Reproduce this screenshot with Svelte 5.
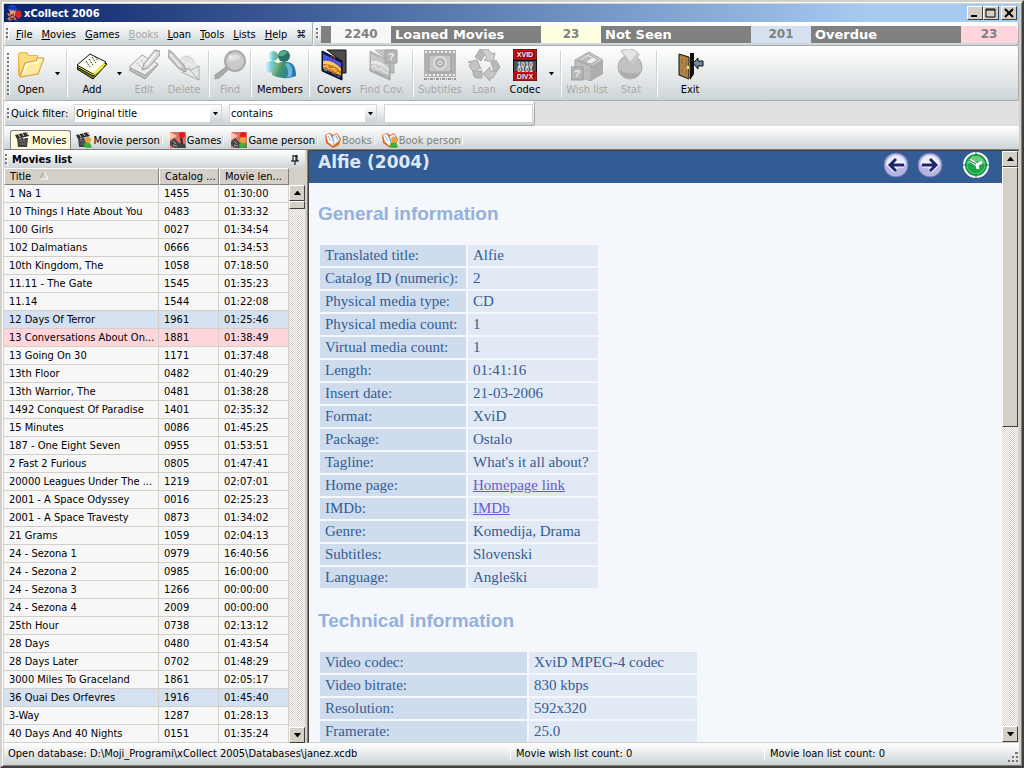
<script lang="ts">
	interface Movie {
		title: string;
		id: string;
		length: string;
		mark?: 'unseen' | 'overdue';
	}

	interface Tool {
		label: string;
		icon: string;
		width: number;
		disabled?: boolean;
		menu?: boolean;
		last?: boolean;
	}

	const menus = [
		{ key: 'F', rest: 'ile' },
		{ key: 'M', rest: 'ovies' },
		{ key: 'G', rest: 'ames' },
		{ key: 'B', rest: 'ooks', disabled: true },
		{ key: 'L', rest: 'oan' },
		{ key: 'T', rest: 'ools' },
		{ key: 'L', rest: 'ists' },
		{ key: 'H', rest: 'elp' }
	];

	// last: a separator follows the button
	const tools: Tool[] = [
		{ label: 'Open', icon: 'open', width: 40, menu: true, last: true },
		{ label: 'Add', icon: 'add', width: 42, menu: true },
		{ label: 'Edit', icon: 'edit', width: 38, disabled: true },
		{ label: 'Delete', icon: 'delete', width: 42, disabled: true, last: true },
		{ label: 'Find', icon: 'find', width: 34, disabled: true, last: true },
		{ label: 'Members', icon: 'members', width: 50, last: true },
		{ label: 'Covers', icon: 'covers', width: 42 },
		{ label: 'Find Cov.', icon: 'findcov', width: 54, disabled: true, last: true },
		{ label: 'Subtitles', icon: 'subtitles', width: 46, disabled: true },
		{ label: 'Loan', icon: 'loan', width: 42, disabled: true },
		{ label: 'Codec', icon: 'codec', width: 40, menu: true, last: true },
		{ label: 'Wish list', icon: 'wish', width: 44, disabled: true },
		{ label: 'Stat', icon: 'stat', width: 44, disabled: true, last: true },
		{ label: 'Exit', icon: 'exit', width: 58 }
	];

	const tabs = [
		{ label: 'Movies', icon: 'clap' },
		{ label: 'Movie person', icon: 'clap', person: true },
		{ label: 'Games', icon: 'game' },
		{ label: 'Game person', icon: 'game', person: true },
		{ label: 'Books', icon: 'book', disabled: true },
		{ label: 'Book person', icon: 'book', person: true, disabled: true }
	];

	const movies: Movie[] = [
		{ title: '1 Na 1', id: '1455', length: '01:30:00' },
		{ title: '10 Things I Hate About You', id: '0483', length: '01:33:32' },
		{ title: '100 Girls', id: '0027', length: '01:34:54' },
		{ title: '102 Dalmatians', id: '0666', length: '01:34:53' },
		{ title: '10th Kingdom, The', id: '1058', length: '07:18:50' },
		{ title: '11.11 - The Gate', id: '1545', length: '01:35:23' },
		{ title: '11.14', id: '1544', length: '01:22:08' },
		{ title: '12 Days Of Terror', id: '1961', length: '01:25:46', mark: 'unseen' },
		{ title: '13 Conversations About On...', id: '1881', length: '01:38:49', mark: 'overdue' },
		{ title: '13 Going On 30', id: '1171', length: '01:37:48' },
		{ title: '13th Floor', id: '0482', length: '01:40:29' },
		{ title: '13th Warrior, The', id: '0481', length: '01:38:28' },
		{ title: '1492 Conquest Of Paradise', id: '1401', length: '02:35:32' },
		{ title: '15 Minutes', id: '0086', length: '01:45:25' },
		{ title: '187 - One Eight Seven', id: '0955', length: '01:53:51' },
		{ title: '2 Fast 2 Furious', id: '0805', length: '01:47:41' },
		{ title: '20000 Leagues Under The ...', id: '1219', length: '02:07:01' },
		{ title: '2001 - A Space Odyssey', id: '0016', length: '02:25:23' },
		{ title: '2001 - A Space Travesty', id: '0873', length: '01:34:02' },
		{ title: '21 Grams', id: '1059', length: '02:04:13' },
		{ title: '24 - Sezona 1', id: '0979', length: '16:40:56' },
		{ title: '24 - Sezona 2', id: '0985', length: '16:00:00' },
		{ title: '24 - Sezona 3', id: '1266', length: '00:00:00' },
		{ title: '24 - Sezona 4', id: '2009', length: '00:00:00' },
		{ title: '25th Hour', id: '0738', length: '02:13:12' },
		{ title: '28 Days', id: '0480', length: '01:43:54' },
		{ title: '28 Days Later', id: '0702', length: '01:48:29' },
		{ title: '3000 Miles To Graceland', id: '1861', length: '02:05:17' },
		{ title: '36 Quai Des Orfevres', id: '1916', length: '01:45:40', mark: 'unseen' },
		{ title: '3-Way', id: '1287', length: '01:28:13' },
		{ title: '40 Days And 40 Nights', id: '0151', length: '01:35:24' }
	];

	const general = [
		['Translated title:', 'Alfie'],
		['Catalog ID (numeric):', '2'],
		['Physical media type:', 'CD'],
		['Physical media count:', '1'],
		['Virtual media count:', '1'],
		['Length:', '01:41:16'],
		['Insert date:', '21-03-2006'],
		['Format:', 'XviD'],
		['Package:', 'Ostalo'],
		['Tagline:', "What's it all about?"],
		['Home page:', 'Homepage link', '#home'],
		['IMDb:', 'IMDb', '#imdb'],
		['Genre:', 'Komedija, Drama'],
		['Subtitles:', 'Slovenski'],
		['Language:', 'Angleški']
	];

	const technical = [
		['Video codec:', 'XviD MPEG-4 codec'],
		['Video bitrate:', '830 kbps'],
		['Resolution:', '592x320'],
		['Framerate:', '25.0']
	];

	let activeTab = $state('Movies');
	let field = $state('Original title');
	let operator = $state('contains');
	let query = $state('');
</script>

{#snippet toolIcon(name: string)}
	<svg class="tool-icon" viewBox="0 0 32 32" aria-hidden="true">
		{#if name === 'open'}
			<path d="M3 5l2-2h7l2 3h9v5l5-2-4 15-19 4-2-2z" fill="#e9b848" />
			<path d="M4 6l1-2h6l2 3h9v4l-12 2-5 12z" fill="#f9dc83" />
			<path d="M5 28l5-14 11-2 1-3h7l-6 16z" fill="#fdeba2" stroke="#d99a2b" />
			<path d="M8 25l4-10 11-2 1-2h3" fill="none" stroke="#fffbdc" stroke-width="2" />
		{:else if name === 'add'}
			<path d="M1 20l13-13 17 8-14 15z" fill="#77771c" stroke="#111" />
			<path d="M1 18L14 7l17 8-14 12z" fill="#f4ee35" stroke="#111" />
			<path d="M1 16L14 5l16 8-13 12z" fill="#fffef0" stroke="#111" />
			<path d="M17 24l12-11-2 6-8 7z" fill="#f7ee4b" />
			<path d="M10 12l4 6m-1-8l4 6m-1-8l4 6m-1-7l3 5" stroke="#333" stroke-dasharray="2 1" />
		{:else if name === 'edit'}
			<path d="M1 21L14 8l16 8-13 14z" fill="#bcbcbc" stroke="#9c9c9c" />
			<path d="M1 18L14 6l16 9-13 11z" fill="#ececec" stroke="#a6a6a6" />
			<path d="M9 14l5 5m-1-8l4 5" stroke="#aaa" stroke-dasharray="2 1" />
			<path d="M14 21l2-6L27 1l5 1v4L20 19z" fill="#d7d7d7" stroke="#979797" />
			<path d="M18 16L28 4" stroke="#f5f5f5" stroke-width="2" />
		{:else if name === 'delete'}
			<path d="M12 10l3-4 5 1 2-1 3 4 6 7v14l-17-8z" fill="#e5e7e8" />
			<path d="M31 17v14l-18-8m2-4l8 2 8-4m-9 4l9 10m-16-8l7-5" fill="none" stroke="#adadad" />
			<path d="M14 10l3-3 4 1m-4 3l3-3 5 3m-6 1l4-3 3 4" fill="none" stroke="#b3b3b3" stroke-dasharray="1 2" />
			<path d="M0 1l3 1 13 14 2 7-7-3L0 8z" fill="#c2c2c2" stroke="#a1a1a1" />
			<path d="M2 5l11 13" stroke="#e9e9e9" stroke-width="2" />
		{:else if name === 'find'}
			<path d="M1 26l11-8 2 3-9 8-4 1z" fill="#aaa" stroke="#9e9e9e" />
			<circle cx="21" cy="12" r="10" fill="#cacaca" stroke="#a9a9a9" stroke-width="2" />
			<path d="M14 12a7 7 0 0 1 13-3q-5 4-13 3" fill="#dcdcdc" />
			<circle cx="17" cy="8" r="2" fill="#eee" />
		{:else if name === 'members'}
			<defs>
				<linearGradient id="back-body" x2="1">
					<stop stop-color="#f2ffff" />
					<stop offset=".5" stop-color="#73cadb" />
					<stop offset="1" stop-color="#55b455" />
				</linearGradient>
				<linearGradient id="front-body" x2="1" y2=".3">
					<stop stop-color="#b2d7b1" />
					<stop offset=".45" stop-color="#46956b" />
					<stop offset="1" stop-color="#2176bd" />
				</linearGradient>
			</defs>
			<path d="M0 21q1-9 8-9 8 0 7 11-10 2-15-2z" fill="url(#back-body)" />
			<circle cx="9" cy="7" r="5" fill="url(#back-body)" />
			<path d="M8 26q0-12 9-13h7q8 1 8 14-13 5-24-1z" fill="url(#front-body)" />
			<circle cx="20" cy="7" r="6" fill="#28716b" />
			<path d="M15 5q3-5 8-2-2 5-8 4z" fill="#57ac83" />
			<path d="M21 15q5 7 2 13h4q4-9-3-14z" fill="#69b6da" />
		{:else if name === 'covers' || name === 'findcov'}
			<g class:pale={name === 'findcov'}>
				<path d="M9 1h19v23h-5V12z" fill="#4c4c4c" stroke="#111" />
				<path d="M4 2l20 10v19L4 22z" fill="#071956" stroke="#080c20" />
				<path d="M5 5l18 9v13L5 20z" fill="#cf7a18" />
				<path d="M5 5l18 9v5q-8-8-18-7z" fill="#4c54e8" />
				<path d="M5 12q9-2 18 8v2q-8-8-18-7z" fill="#ffcf62" />
				<path d="M5 17l4 1 2 2 4 0 3 3 5 2m-15-9l3 2m4 1l4 3" fill="none" stroke="#ffe58d" stroke-dasharray="3 1" />
				<path d="M13 7l5 3m-4 14l5 3" stroke="#f04428" stroke-dasharray="2 1" />
				<path d="M6 21l3 1m10 5l3 1" stroke="#438ae8" />
			</g>
			{#if name === 'findcov'}
				<path d="M19 1h12v13H19z" fill="#b5b5b5" stroke="#a2a2a2" />
				<text x="22" y="11" class="mark">?</text>
			{/if}
		{:else if name === 'subtitles'}
			<path d="M0 1h32v27H0z" fill="#b1b1b1" />
			<path d="M5 6h22v17H5z" fill="#c6c6c6" stroke="#9d9d9d" />
			<path d="M1 3h31M1 26h31" stroke="#eee" stroke-width="2" stroke-dasharray="2 2" />
			<circle cx="16" cy="14" r="6" fill="#b0b0b0" stroke="#ddd" stroke-width="2" />
			<circle cx="16" cy="14" r="2" fill="none" stroke="#eee" />
			<path d="M0 30h32" stroke="#999" stroke-dasharray="3 1 1 1" stroke-width="2" />
		{:else if name === 'loan'}
			<g fill="#b8b8b8" stroke="#a8a8a8">
				<path d="M7 8l5-8h8l-7 12z" />
				<path d="M13 0h7l4 5 3-1-2 9-9-2 3-2z" fill="#cfcfcf" />
				<path d="M0 13l9-2 4 9-3-1-3 6-6-8 2-3z" fill="#c5c5c5" />
				<path d="M5 22h9v7H8q-3-1-3-7z" />
				<path d="M15 25l7-7v4h7l-4 7h-3v3z" fill="#c4c4c4" />
				<path d="M23 14l5-3 4 7-3 4h-3z" />
			</g>
		{:else if name === 'codec'}
			<path d="M4 0h24v32H4z" fill="#111" />
			<path d="M5 1h22v9H5zm0 22h22v8H5z" fill="#9c0813" stroke="#ef1c1b" />
			<path d="M5 12h22v10H5z" fill="#46525f" />
			<g class="codec-text">
				<text x="16" y="8">XVID</text>
				<text x="16" y="18">1010</text>
				<text x="16" y="23">0101</text>
				<text x="16" y="30">DIVX</text>
			</g>
		{:else if name === 'wish'}
			<path d="M4 11L18 3l14 8-10 6z" fill="#c9c9c9" stroke="#aaa" />
			<path d="M4 11v16l16 5V17z" fill="#bdbdbd" stroke="#a8a8a8" />
			<path d="M32 11v14l-12 7V17z" fill="#adadad" />
			<path d="M8 11l9-6 10 6-7 4z" fill="#eee" stroke="#a8a8a8" />
			<path d="M10 11l7-4 4 2-6 4z" fill="#bbb" />
			<path d="M0 18h12v13H0z" fill="#b6b6b6" stroke="#999" />
			<text x="3" y="28" class="mark">?</text>
		{:else if name === 'stat'}
			<circle cx="15" cy="18" r="12" fill="#c1c1c1" stroke="#adadad" />
			<path d="M4 21a12 12 0 0 0 22 2q-10 4-22-2z" fill="#adadad" />
			<path d="M6 2q7-4 13-1l4 3-8 10z" fill="#e4e4e4" stroke="#b2b2b2" />
			<path d="M15 14l8-10 2 2-8 10z" fill="#cacaca" />
		{:else if name === 'exit'}
			<path d="M5 4h15v21l-4 6V4z" fill="#111" />
			<path d="M5 5l10 3v22L5 26z" fill="#a57c41" stroke="#1a130a" />
			<path d="M7 8l2 1v7l-2-1zm4 2l2 1v7l-2-1zm-4 8l2 1v6l-2-1zm4 2l2 1v6l-2-1z" fill="#77572c" stroke="#bd9450" />
			<path d="M14 17v3" stroke="#fff13c" stroke-width="2" />
			<path d="M19 14l5-5v3h5v5h-5v3z" fill="#6f8799" stroke="#111" />
		{/if}
	</svg>
{/snippet}

{#snippet tabIcon(name: string, person: boolean)}
	<svg class="tab-icon" viewBox="0 0 16 16" aria-hidden="true">
		{#if name === 'clap'}
			<path d="M2 6h11l-1 9H3z" fill="#424242" />
			<path d="M0 3l12-3 2 4-12 3z" fill="#2d2d2d" />
			<path d="M3 2l2 3m2-4l2 3m2-4l2 3M4 7l2-1m2 1l2-1" stroke="#ddd" />
			<path d="M4 9h7m-6 3h6" stroke="#777" />
		{:else if name === 'game'}
			<path d="M0 0h16v16H0z" fill="#d77062" />
			<path d="M0 0l7 4-5 3-2 1z" fill="#ffc3a3" />
			<path d="M0 10l4-4 5 5 6 1 1 4H5l-5-3z" fill="#444" />
			<path d="M10 5l2-1 1 8h-2z" fill="#292929" />
			<circle cx="12" cy="3" r="3" fill="#e51d18" />
			<path d="M3 9l3 3m-3 1l4 1" stroke="#aaa" />
		{:else}
			<path d="M0 3l5-2 3 2 4-2 4 6-2 6-6 3-7-5z" fill="#dd6a28" />
			<path d="M1 3l4-1 4 9-1 3-5-4z" fill="#fff" />
			<path d="M8 4l4-2 3 6-6 5z" fill="#e8f1ff" />
			<path d="M3 4l3 5m1-5l2 8m2-8l2 4" fill="none" stroke="#8bb5e8" />
		{/if}
		{#if person}
			<path d="M8 15q0-5 3-5t5 5q-4 2-8 0z" fill="#3aae39" />
			<circle cx="12" cy="8" r="3" fill="#e9a337" />
		{/if}
	</svg>
{/snippet}

{#snippet arrow(up: boolean)}
	<svg class="arrow" viewBox="0 0 7 4" aria-hidden="true">
		<path d={up ? 'M0 4l3-4h1l3 4z' : 'M0 0h7L4 4H3z'} />
	</svg>
{/snippet}

{#snippet info(rows: string[][], wide: boolean)}
	<table class="info" class:wide>
		<tbody>
			{#each rows as [label, value, href] (label)}
				<tr>
					<th scope="row">{label}</th>
					<td>{#if href}<a {href}>{value}</a>{:else}{value}{/if}</td>
				</tr>
			{/each}
		</tbody>
	</table>
{/snippet}

<div class="window">
	<header class="titlebar">
		<svg class="app-icon" viewBox="0 0 16 16" aria-hidden="true">
			<path d="M2 2l3-2 5 1 1 4-3 2-6-1z" fill="#2447d8" />
			<path d="M3 5l7 1-1 5-5-2z" fill="#e79a67" />
			<path d="M10 6l4-1 2 6-4 3-3-4z" fill="#dd2424" />
			<path d="M1 8l4 1 4 3 2 4-4-2-3 2-3-2 2-2z" fill="#d87952" />
			<path d="M0 6l4 1m-1 5l5-3m-4 5l4-1M2 3h8" stroke="#131b64" />
		</svg>
		<h1>xCollect 2006</h1>
		<div class="window-buttons">
			<button aria-label="Minimize"><svg viewBox="0 0 12 10"><path d="M2 8h6" stroke="#000" stroke-width="2" /></svg></button>
			<button aria-label="Maximize"><svg viewBox="0 0 12 10"><path d="M1 1h9v8H1zM1 2h9" fill="none" stroke="#000" /></svg></button>
			<button aria-label="Close"><svg viewBox="0 0 12 10"><path d="M2 1l8 8m0-8L2 9" stroke="#000" stroke-width="2" /></svg></button>
		</div>
	</header>

	<div class="menu-row">
		<nav class="band menubar">
			<span class="grip"></span>
			{#each menus as menu}
				<button disabled={menu.disabled}><u>{menu.key}</u>{menu.rest}</button>
			{/each}
			<button>⌘</button>
		</nav>
		<div class="band counters">
			<span class="grip"></span>
			<span class="name first"></span>
			<span class="count">2240</span>
			<span class="name">Loaned Movies</span>
			<span class="count loaned">23</span>
			<span class="name">Not Seen</span>
			<span class="count unseen">201</span>
			<span class="name">Overdue</span>
			<span class="count overdue">23</span>
		</div>
	</div>

	<div class="band toolbar">
		<span class="grip"></span>
		{#each tools as tool (tool.label)}
			<button class="tool" style:width="{tool.width}px" disabled={tool.disabled}>
				{@render toolIcon(tool.icon)}
				<span>{tool.label}</span>
			</button>
			{#if tool.menu}
				<button class="drop" aria-label="{tool.label} options">{@render arrow(false)}</button>
			{/if}
			{#if tool.last}
				<span class="separator"></span>
			{/if}
		{/each}
	</div>

	<div class="filter-row">
		<div class="band filter">
			<span class="grip"></span>
			<label for="field">Quick filter:</label>
			<div class="combo">
				<select id="field" bind:value={field}>
					<option>Original title</option>
					<option>Translated title</option>
				</select>
				<span class="combo-arrow">{@render arrow(false)}</span>
			</div>
			<div class="combo">
				<select aria-label="Condition" bind:value={operator}>
					<option>contains</option>
					<option>starts with</option>
				</select>
				<span class="combo-arrow">{@render arrow(false)}</span>
			</div>
			<input type="text" aria-label="Filter text" bind:value={query} />
		</div>
	</div>

	<div class="tabs" role="tablist">
		{#each tabs as tab (tab.label)}
			<button
				role="tab"
				aria-selected={activeTab === tab.label}
				class:active={activeTab === tab.label}
				disabled={tab.disabled}
				onclick={() => (activeTab = tab.label)}
			>
				{@render tabIcon(tab.icon, !!tab.person)}
				<span>{tab.label}</span>
			</button>
		{/each}
	</div>

	<main>
		<section class="list-panel">
			<div class="panel-title">
				<span class="grip"></span>
				<h2>Movies list</h2>
				<button aria-label="Pin panel">
					<svg viewBox="0 0 8 10"><path d="M2 0v6M2 1h4M5 0v6M6 0v6M0 6h8M4 6v4" stroke="#000" fill="none" /></svg>
				</button>
			</div>
			<div class="list-body">
				<table class="list">
					<thead>
						<tr>
							<th class="title-col">Title <svg viewBox="0 0 9 8"><path d="M0 7L4 0" stroke="#999" /><path d="M4 0l4 7H0" stroke="#fff" fill="none" /></svg></th>
							<th class="id-col">Catalog ...</th>
							<th>Movie len...</th>
						</tr>
					</thead>
					<tbody>
						{#each movies as movie (movie.id)}
							<tr class={movie.mark}>
								<td>{movie.title}</td>
								<td>{movie.id}</td>
								<td>{movie.length}</td>
							</tr>
						{/each}
					</tbody>
				</table>
				<div class="scrollbar list-scroll">
					<button aria-label="Scroll list up">{@render arrow(true)}</button>
					<span class="thumb"></span>
					<button class="down" aria-label="Scroll list down">{@render arrow(false)}</button>
				</div>
			</div>
		</section>

		<section class="detail">
			<article>
				<div class="detail-head">
					<h2>Alfie (2004)</h2>
					<nav>
						<a href="#previous" aria-label="Previous movie">
							<svg viewBox="0 0 26 26">
								<circle cx="13" cy="13" r="12" fill="#b3b7df" stroke="#7774bb" />
								<path d="M3 13a10 10 0 0 1 20 0q-10-5-20 0z" fill="#eaebfa" />
								<path d="M21 13H7m6-6l-6 6 6 6" fill="none" stroke="#fff" stroke-width="5" />
								<path d="M21 13H7m6-6l-6 6 6 6" fill="none" stroke="#20236f" stroke-width="3" />
							</svg>
						</a>
						<a href="#next" aria-label="Next movie">
							<svg viewBox="0 0 26 26">
								<circle cx="13" cy="13" r="12" fill="#b3b7df" stroke="#7774bb" />
								<path d="M3 13a10 10 0 0 1 20 0q-10-5-20 0z" fill="#eaebfa" />
								<path d="M5 13h14m-6-6l6 6-6 6" fill="none" stroke="#fff" stroke-width="5" />
								<path d="M5 13h14m-6-6l6 6-6 6" fill="none" stroke="#20236f" stroke-width="3" />
							</svg>
						</a>
						<a class="seen" href="#seen" aria-label="Mark as seen">
							<svg viewBox="0 0 26 26">
								<circle cx="13" cy="13" r="12" fill="#129646" stroke="#fff" stroke-width="2" />
								<circle cx="13" cy="13" r="9" fill="#19a94b" stroke="#60cf76" />
								<path d="M5 12a8 8 0 0 1 16 0q-8-5-16 0z" fill="#6acb78" />
								<path d="M13 0v4m0 18v4M0 13h4m18 0h4" stroke="#12733f" />
								<path d="M7 8l7 5 5-3m-5 3l1 4" fill="none" stroke="#fff" stroke-width="3" />
								<path d="M6 8l7 4" stroke="#234f70" />
							</svg>
						</a>
					</nav>
				</div>
				<h3>General information</h3>
				{@render info(general, false)}
				<h3>Technical information</h3>
				{@render info(technical, true)}
			</article>
			<div class="scrollbar">
				<button aria-label="Scroll up">{@render arrow(true)}</button>
				<span class="thumb long"></span>
				<button class="down" aria-label="Scroll down">{@render arrow(false)}</button>
			</div>
		</section>
	</main>

	<footer>
		<span class="path">Open database: D:\Moji_Programi\xCollect 2005\Databases\janez.xcdb</span>
		<span>Movie wish list count: 0</span>
		<span class="loans">Movie loan list count: 0</span>
		<svg viewBox="0 0 12 12" aria-hidden="true">
			<path d="M8 1h3M5 5h2m2 0h2M1 9h2m2 0h2m2 0h2" stroke="#777" stroke-width="2" />
			<path d="M10 3h1M7 7h1m3 0h1M3 11h1m3 0h1m3 0h1" stroke="#fff" />
		</svg>
	</footer>
</div>

<style>
	:global(body) {
		margin: 0;
	}

	.window {
		--face: #d4d0c8;
		--steel: linear-gradient(#fff, #e8ebec 50%, #ccd4d7);
		box-sizing: border-box;
		height: 100vh;
		display: flex;
		flex-direction: column;
		overflow: hidden;
		padding: 2px 3px 2px 2px;
		border: 2px solid;
		border-color: var(--face) #404040 #404040 var(--face);
		box-shadow: inset 1px 1px #fff, inset -1px -1px #808080;
		background: var(--face);
		font: 11px/13px 'DejaVu Sans Condensed', 'DejaVu Sans', sans-serif;
		color: #000;
	}

	h1, h2, h3 {
		margin: 0;
	}

	button {
		padding: 0;
		border: 0;
		background: none;
		font: inherit;
		color: inherit;
	}

	button:disabled {
		color: #a8a8a8;
	}

	svg {
		display: block;
	}

	/* Title bar */
	.titlebar {
		flex: none;
		display: flex;
		align-items: center;
		height: 18px;
		padding: 0 2px;
		background: linear-gradient(90deg, #0a246a, #a6caf0 85%);
		color: #fff;
	}

	.titlebar h1 {
		flex: 1;
		margin-left: 2px;
		font-size: 11px;
		font-weight: bold;
	}

	.app-icon {
		width: 16px;
		height: 16px;
	}

	.window-buttons {
		display: flex;
	}

	.window-buttons button {
		width: 16px;
		height: 14px;
		background: var(--face);
		border: 1px solid;
		border-color: #fff #404040 #404040 #fff;
	}

	.window-buttons button:last-child {
		margin-left: 2px;
	}

	.window-buttons svg {
		width: 12px;
		height: 10px;
		margin: 0 auto;
	}

	/* Bands */
	.band {
		display: flex;
		align-items: center;
		box-sizing: border-box;
		background: var(--steel);
		border: 1px solid #a9adaf;
		border-top-color: #fff;
		border-left-color: #fff;
		border-radius: 3px;
	}

	.grip {
		flex: none;
		width: 3px;
		height: 12px;
		margin: 0 1px;
		background: repeating-linear-gradient(#777 0 2px, transparent 2px 4px);
		border-right: 1px solid #fff;
		box-sizing: border-box;
	}

	.menu-row {
		flex: none;
		display: flex;
		height: 24px;
	}

	.menubar {
		width: 309px;
	}

	.menubar button {
		margin-left: 6px;
		margin-right: 3px;
	}

	.counters {
		flex: 1;
		min-width: 0;
		padding: 0 1px;
	}

	.name,
	.count {
		flex: 0 0 150px;
		box-sizing: border-box;
		height: 17px;
		padding-left: 4px;
		background: #808080;
		color: #fff;
		font: bold 13px/17px 'DejaVu Sans', sans-serif;
		white-space: nowrap;
	}

	.name.first {
		flex-basis: 10px;
		margin-left: 1px;
	}

	.count {
		flex-basis: 60px;
		padding: 0;
		background: #f7f7f7;
		color: #808080;
		font-size: 12px;
		text-align: center;
	}

	.count.loaned {
		background: #ffffe1;
	}

	.count.unseen {
		background: #d5e0f1;
	}

	.count.overdue {
		flex: 1;
		background: #ffd5dc;
	}

	.toolbar {
		flex: none;
		height: 55px;
		padding-left: 1px;
	}

	.toolbar .grip {
		height: 42px;
	}

	.tool {
		flex: none;
		display: flex;
		flex-direction: column;
		align-items: center;
		gap: 2px;
		height: 50px;
		white-space: nowrap;
	}

	.tool-icon {
		width: 32px;
		height: 32px;
	}

	.pale {
		filter: grayscale(1);
		opacity: 0.3;
	}

	.mark {
		font: bold 11px 'Liberation Mono', monospace;
		fill: #eee;
	}

	.codec-text {
		font: bold 7px 'Liberation Sans', sans-serif;
		fill: #e8eef2;
		text-anchor: middle;
	}

	.drop {
		width: 12px;
		height: 40px;
	}

	.arrow {
		width: 7px;
		height: 4px;
		margin: 0 auto;
	}

	.drop .arrow,
	.combo-arrow .arrow {
		width: 5px;
		height: 3px;
	}

	.separator {
		flex: none;
		width: 1px;
		height: 46px;
		margin: 0 3px;
		background: #fff;
		border-left: 1px solid #d0d4d6;
	}

	/* Quick filter */
	.filter-row {
		flex: none;
		display: flex;
		background: #e0e0e0;
	}

	.filter {
		width: 531px;
		height: 25px;
		padding: 0 1px;
	}

	.filter label {
		width: 63px;
		white-space: nowrap;
	}

	.combo {
		position: relative;
		width: 148px;
		margin-right: 7px;
	}

	.combo select,
	.filter input {
		appearance: none;
		box-sizing: border-box;
		width: 100%;
		height: 19px;
		padding: 0 1px;
		border: 1px solid #d4d4d4;
		border-radius: 0;
		background: #fff;
		font: inherit;
		color: inherit;
	}

	.filter input {
		flex: 1;
		min-width: 0;
	}

	.combo-arrow {
		position: absolute;
		top: 1px;
		right: 1px;
		bottom: 1px;
		display: flex;
		align-items: center;
		width: 11px;
		background: var(--steel);
		pointer-events: none;
	}

	.combo-arrow .arrow {
		margin: auto;
	}

	/* Tabs */
	.tabs {
		flex: none;
		display: flex;
		align-items: flex-end;
		height: 23px;
		padding-left: 6px;
		background: var(--steel);
		border-bottom: 1px solid #808080;
	}

	.tabs button {
		display: flex;
		align-items: center;
		height: 19px;
		padding: 0 1px 0 4px;
		border: 1px solid transparent;
		border-bottom: 0;
		white-space: nowrap;
	}

	.tabs span {
		margin-left: 1px;
	}

	.tabs button:not(.active)::after {
		content: '';
		width: 1px;
		height: 9px;
		margin-left: 1px;
		background: #fff;
		border-left: 1px solid #d0d4d6;
	}

	.tabs button:disabled {
		color: #808080;
	}

	.tabs .active {
		padding-right: 4px;
		background: #fffbdf;
		border-color: #808080;
		border-radius: 3px 3px 0 0;
	}

	.tab-icon {
		width: 16px;
		height: 16px;
	}

	/* Movie list */
	main {
		flex: 1;
		display: flex;
		min-height: 0;
	}

	.list-panel {
		flex: none;
		display: flex;
		flex-direction: column;
		width: 301px;
	}

	.panel-title {
		flex: none;
		display: flex;
		align-items: center;
		height: 17px;
		padding-top: 1px;
		background: var(--steel);
	}

	.panel-title h2 {
		flex: 1;
		margin-left: 3px;
		font-size: 11px;
		font-weight: bold;
	}

	.panel-title svg {
		width: 8px;
		height: 10px;
		margin-right: 6px;
	}

	.list-body {
		flex: 1;
		display: flex;
		min-height: 0;
		overflow: hidden;
	}

	.list {
		flex: 1;
		align-self: flex-start;
		width: 0;
		table-layout: fixed;
		border-collapse: separate;
		border-spacing: 0;
		background: #f7f7f7;
	}

	.list th {
		box-sizing: border-box;
		height: 17px;
		padding: 0 5px;
		background: var(--face);
		border: 1px solid;
		border-color: #fff #808080 #808080 #fff;
		font-weight: normal;
		text-align: left;
		white-space: nowrap;
	}

	.list th svg {
		display: inline-block;
		width: 9px;
		height: 8px;
		margin-left: 6px;
	}

	.title-col {
		width: 155px;
	}

	.id-col {
		width: 60px;
	}

	.list td {
		box-sizing: border-box;
		height: 18px;
		padding: 0 5px;
		border-right: 1px solid var(--face);
		border-bottom: 1px solid var(--face);
		white-space: nowrap;
		overflow: hidden;
	}

	.list .unseen td {
		background: #d5e0f1;
	}

	.list .overdue td {
		background: #ffd5dc;
	}

	/* Scrollbars */
	.scrollbar {
		flex: none;
		display: flex;
		flex-direction: column;
		width: 16px;
		background: repeating-conic-gradient(#fff 0 25%, #d4d0c8 0 50%) 0 0 / 2px 2px;
	}

	.list-scroll {
		margin-top: 17px;
	}

	.scrollbar button,
	.thumb {
		box-sizing: border-box;
		height: 16px;
		background: var(--face);
		border: 1px solid;
		border-color: #fff #404040 #404040 #fff;
	}

	.thumb {
		height: 8px;
	}

	.thumb.long {
		height: 44%;
	}

	.scrollbar .down {
		margin-top: auto;
	}

	/* Movie details */
	.detail {
		flex: 1;
		display: flex;
		min-width: 0;
		margin-left: 3px;
		border: 1px solid #808080;
		border-color: #404040 var(--face) var(--face) #404040;
		box-shadow: -1px 0 #808080;
	}

	article {
		flex: 1;
		min-width: 0;
		overflow: hidden;
		background: #f4f7fc;
		color: #335c94;
	}

	.detail-head {
		display: flex;
		justify-content: space-between;
		height: 32px;
		padding-left: 9px;
		background: #335c94;
	}

	.detail-head h2 {
		color: #dce7f7;
		font: bold 17px/22px 'DejaVu Sans', sans-serif;
	}

	.detail-head nav {
		display: flex;
		padding: 1px 13px 0 0;
	}

	.detail-head a {
		margin-left: 8px;
	}

	.detail-head .seen {
		margin-left: 20px;
	}

	.detail-head svg {
		width: 26px;
		height: 26px;
	}

	h3 {
		margin: 19px 9px 18px;
		color: #94b1dc;
		font: bold 19px/23px 'Liberation Sans', Arial, sans-serif;
	}

	.info {
		margin-left: 9px;
		border-spacing: 2px;
		font: 15px/19px 'Liberation Serif', 'Times New Roman', serif;
	}

	.info th,
	.info td {
		box-sizing: border-box;
		width: 146px;
		height: 21px;
		padding: 1px 5px;
		background: #cfdcee;
		font-weight: normal;
		text-align: left;
		white-space: nowrap;
	}

	.info td {
		width: 130px;
		background: #e1e9f5;
	}

	.info.wide th {
		width: 207px;
	}

	.info.wide td {
		width: 168px;
	}

	.info a {
		color: #6a5acd;
	}

	/* Status bar */
	footer {
		flex: none;
		display: flex;
		align-items: center;
		height: 21px;
		padding-left: 4px;
		background: var(--steel);
	}

	footer span {
		flex: 0 0 254px;
		box-sizing: border-box;
		padding-left: 5px;
		border-left: 1px solid #fff;
		white-space: nowrap;
	}

	footer .path {
		flex-basis: 502px;
		padding-left: 0;
		border: 0;
	}

	footer .loans {
		flex: 1;
	}

	footer svg {
		align-self: flex-end;
		width: 12px;
		height: 12px;
	}
</style>
